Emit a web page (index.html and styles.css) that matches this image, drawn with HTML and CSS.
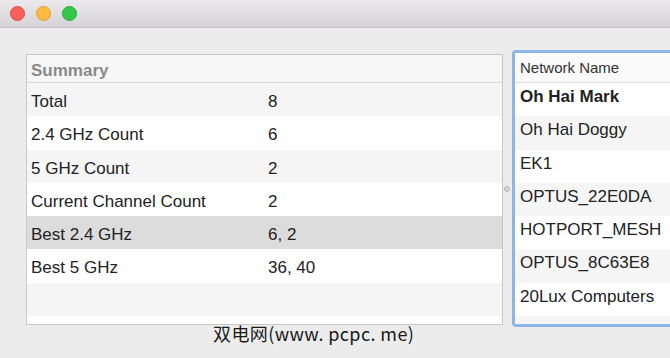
FILE: index.html
```html
<!DOCTYPE html>
<html lang="en">
<head>
  <meta charset="UTF-8" />
  <title>WiFi Explorer</title>
  <link rel="stylesheet" href="styles.css">
</head>
<body>
  <div class="window">
    <div class="titlebar">
      <span class="light red"></span>
      <span class="light yellow"></span>
      <span class="light green"></span>
    </div>

    <div class="content">
      <!-- Summary table -->
      <div class="summary">
        <div class="summary-head">Summary</div>
        <div class="row alt"><span class="label">Total</span><span>8</span></div>
        <div class="row"><span class="label">2.4 GHz Count</span><span>6</span></div>
        <div class="row alt"><span class="label">5 GHz Count</span><span>2</span></div>
        <div class="row"><span class="label">Current Channel Count</span><span>2</span></div>
        <div class="row selected"><span class="label">Best 2.4 GHz</span><span>6, 2</span></div>
        <div class="row"><span class="label">Best 5 GHz</span><span>36, 40</span></div>
        <div class="row alt"></div>
        <div class="row"></div>
      </div>

      <div class="splitter"><span class="knob"></span></div>

      <!-- Network list -->
      <div class="networks">
        <div class="networks-head">Network Name</div>
        <div class="net bold">Oh Hai Mark</div>
        <div class="net alt">Oh Hai Doggy</div>
        <div class="net">EK1</div>
        <div class="net alt">OPTUS_22E0DA</div>
        <div class="net">HOTPORT_MESH</div>
        <div class="net alt">OPTUS_8C63E8</div>
        <div class="net">20Lux Computers</div>
        <div class="net alt"></div>
      </div>
    </div>

    <div class="watermark">双电网(www. pcpc. me)</div>
  </div>
</body>
</html>
```

FILE: styles.css
```css
html, body {
  margin: 0;
  padding: 0;
}
body {
  width: 670px;
  height: 358px;
  overflow: hidden;
  background: #ececec;
  font-family: "Liberation Sans", Arial, sans-serif;
  color: #222;
}
.window {
  position: relative;
  height: 358px;
}
.titlebar {
  height: 27px;
  border-bottom: 1px solid #c4c2c4;
  background: linear-gradient(#ebe9eb, #d5d3d5);
  display: flex;
  align-items: center;
  gap: 11px;
  padding-left: 10px;
}
.light {
  width: 15px;
  height: 15px;
  border-radius: 50%;
  box-sizing: border-box;
}
.red { background: #fc605c; border: 1px solid #e14842; }
.yellow { background: #fdbc40; border: 1px solid #dea034; }
.green { background: #34c84a; border: 1px solid #27aa35; }

.content {
  display: flex;
  align-items: flex-start;
  padding: 22px 0 0 26px;
}
.summary {
  flex-shrink: 0;
  width: 475px;
  height: 269px;
  margin-top: 4px;
  border: 1px solid #c8c8c8;
  background: #fff;
  overflow: hidden;
  font-size: 17px;
}
.summary-head {
  height: 27px;
  line-height: 32px;
  padding-left: 4px;
  font-weight: bold;
  color: #8a8a8a;
  background: #f6f6f6;
  border-bottom: 1px solid #d8d8d8;
}
.row {
  display: flex;
  height: 33.3px;
  line-height: 38px;
  padding-left: 4px;
}
.row .label {
  width: 237px;
}
.alt { background: #f5f5f5; }
.selected { background: #dcdcdc; }

.splitter {
  flex-shrink: 0;
  width: 9px;
  height: 277px;
  display: flex;
  align-items: center;
  justify-content: center;
}
.knob {
  width: 6px;
  height: 6px;
  border-radius: 50%;
  background: #d6d6d6;
  border: 1px solid #b4b4b4;
  box-sizing: border-box;
  margin-left: -1px;
}

.networks {
  flex-shrink: 0;
  width: 170px;
  height: 271px;
  border: 3px solid #8db5e8;
  border-right: none;
  border-radius: 4px 0 0 4px;
  background: #fff;
  overflow: hidden;
  font-size: 17px;
}
.networks-head {
  height: 29px;
  line-height: 30px;
  padding-left: 5px;
  font-size: 15px;
  color: #333;
  background: #fafafa;
  border-bottom: 1px solid #dedede;
}
.net {
  height: 33.3px;
  line-height: 28.5px;
  padding-left: 5px;
  white-space: nowrap;
}
.net.bold { font-weight: bold; }

.watermark {
  position: absolute;
  left: 213px;
  top: 320px;
  font-family: "Noto Sans CJK SC", sans-serif;
  font-size: 18px;
  letter-spacing: 0.4px;
  color: #1a1a1a;
}
```
